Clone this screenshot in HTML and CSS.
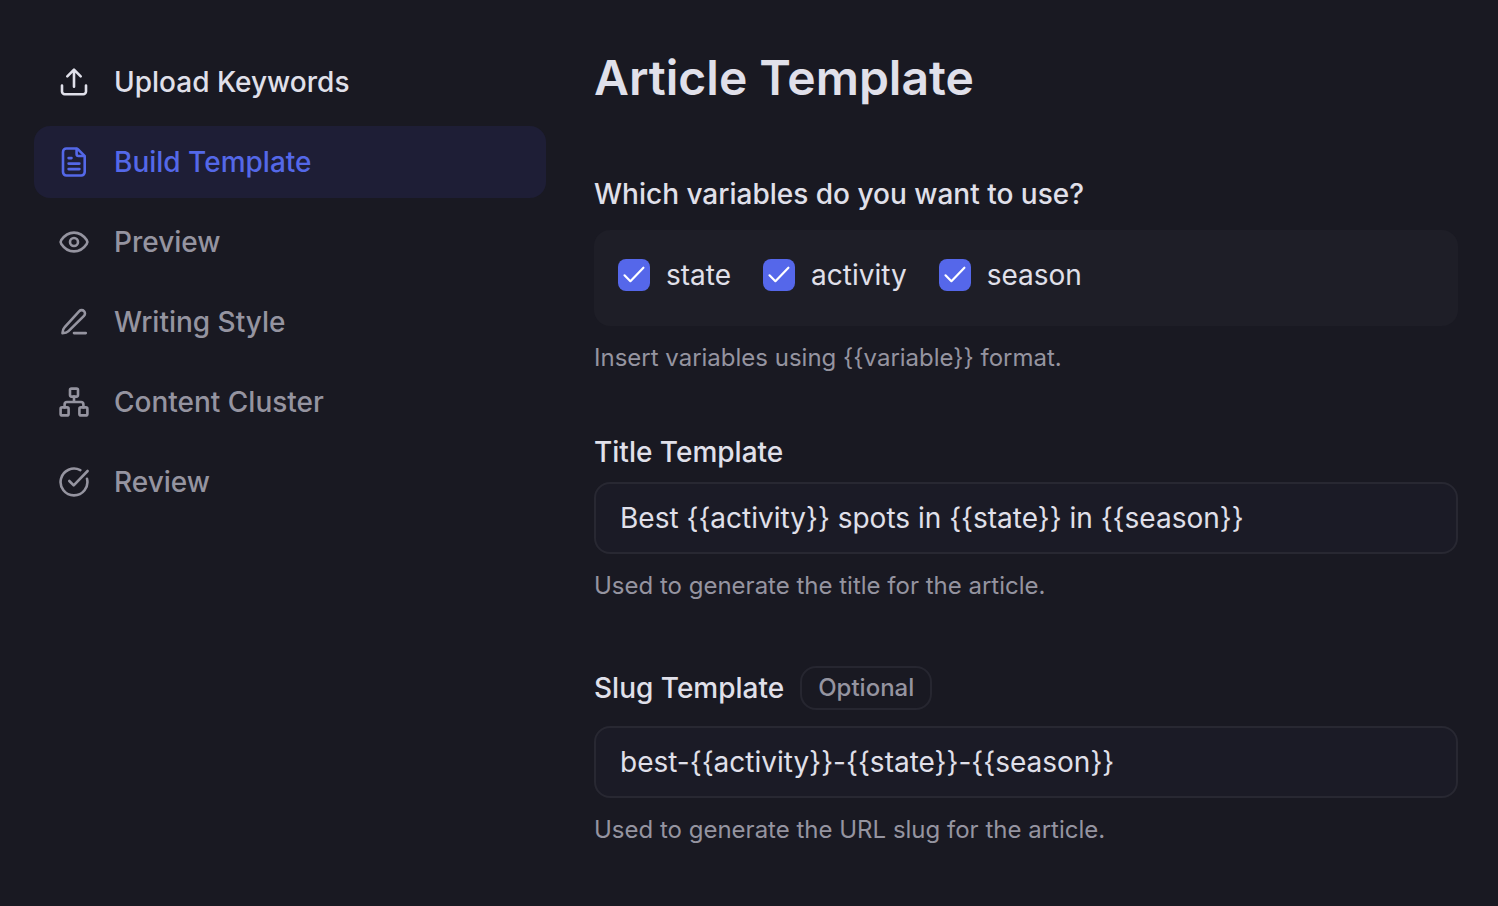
FILE: index.html
```html
<!DOCTYPE html>
<html lang="en">
<head>
    <meta charset="UTF-8">
    <meta name="viewport" content="width=device-width, initial-scale=1.0">
    <title>Article Template</title>
    <link rel="stylesheet" href="styles.css">
</head>
<body>
    <div class="layout">
        <nav class="steps" aria-label="Steps">
            <a class="step done" href="#upload">
                <svg class="icon" viewBox="0 0 32 32" aria-hidden="true">
                    <path d="M4 19.5v6a2.7 2.7 0 0 0 2.7 2.7h18.6a2.7 2.7 0 0 0 2.7-2.7v-6"/>
                    <path d="M9.3 10.3 16 3.6l6.7 6.7M16 3.8v16.9"/>
                </svg>
                Upload Keywords
            </a>
            <a class="step active" href="#template" aria-current="step">
                <svg class="icon" viewBox="0 0 32 32" aria-hidden="true">
                    <path d="M18.4 2.5H8.4A3.4 3.4 0 0 0 5 5.9v20.2a3.4 3.4 0 0 0 3.4 3.4h14.9a3.4 3.4 0 0 0 3.4-3.4V10.8a2 2 0 0 0-.6-1.4l-6.3-6.3a2 2 0 0 0-1.4-.6z"/>
                    <path d="M18.6 3v5.1c0 1 .8 1.9 1.9 1.9h5.8M10.6 12.1h2.9M10.6 17.6h10.8M10.6 23.1h10.8"/>
                </svg>
                Build Template
            </a>
            <a class="step" href="#preview">
                <svg class="icon" viewBox="0 0 32 32" aria-hidden="true">
                    <path d="M3.3 17.9a3.3 3.3 0 0 1 0-3.8C5.200 11.300 9.200 6.600 16 6.600s10.800 4.700 12.700 7.500a3.300 3.300 0 0 1 0 3.800C26.800 20.700 22.800 25.400 16 25.400S5.200 20.700 3.300 17.900z"/>
                    <circle cx="16" cy="16" r="4"/>
                </svg>
                Preview
            </a>
            <a class="step" href="#style">
                <svg class="icon" viewBox="0 0 32 32" aria-hidden="true">
                    <path d="M4.500 27.100s.1-3.900 2-5.800L21.300 5.100a3.300 3.300 0 0 1 4.700 4.700L10.500 25.100c-1.900 1.900-6 2-6 2z"/>
                    <path d="M16 27.100h11.800"/>
                </svg>
                Writing Style
            </a>
            <a class="step" href="#cluster">
                <svg class="icon" viewBox="0 0 32 32" aria-hidden="true">
                    <rect x="12" y="2.600" width="8" height="8" rx="1.500"/>
                    <rect x="2.600" y="21.400" width="8" height="8" rx="1.500"/>
                    <rect x="21.400" y="21.400" width="8" height="8" rx="1.500"/>
                    <path d="M16 10.600V16M6.600 21.400v-3A2.400 2.400 0 0 1 9 16h14a2.400 2.400 0 0 1 2.400 2.400v3"/>
                </svg>
                Content Cluster
            </a>
            <a class="step" href="#review">
                <svg class="icon" viewBox="0 0 32 32" aria-hidden="true">
                    <path d="M29 12.800A13.400 13.400 0 1 1 22.300 4.200"/>
                    <path d="M11.300 15l4.400 4.400L29.600 5"/>
                </svg>
                Review
            </a>
        </nav>

        <main class="content">
            <h1>Article Template</h1>
            <form class="fields">
                <div class="field" role="group" aria-labelledby="variablesLabel">
                    <div class="group-label" id="variablesLabel">Which variables do you want to use?</div>
                    <div class="variables">
                        <label class="variable"><input type="checkbox" name="state" checked>state</label>
                        <label class="variable"><input type="checkbox" name="activity" checked>activity</label>
                        <label class="variable"><input type="checkbox" name="season" checked>season</label>
                    </div>
                    <p class="hint">Insert variables using {{variable}} format.</p>
                </div>

                <div class="field">
                    <label class="label" for="titleTemplate">Title Template</label>
                    <input class="text-input" type="text" id="titleTemplate" value="Best {{activity}} spots in {{state}} in {{season}}">
                    <p class="hint">Used to generate the title for the article.</p>
                </div>

                <div class="field">
                    <div class="label-row">
                        <label class="label" for="slugTemplate">Slug Template</label>
                        <span class="badge">Optional</span>
                    </div>
                    <input class="text-input" type="text" id="slugTemplate" value="best-{{activity}}-{{state}}-{{season}}">
                    <p class="hint">Used to generate the URL slug for the article.</p>
                </div>
            </form>
        </main>
    </div>
</body>
</html>
```
FILE: styles.css
```css
* {
    box-sizing: border-box;
}

body {
    margin: 0;
    min-height: 100vh;
    background-color: #191922;
    color: #e0e0ea;
    font-family: Inter, "Liberation Sans", sans-serif;
    font-size: 28px;
    line-height: 40px;
}

.layout {
    display: grid;
    grid-template-columns: 16fr 27fr;
    gap: 48px;
    padding: 46px 40px 46px 34px;
}

/* Step navigation */
.steps {
    display: flex;
    flex-direction: column;
    gap: 8px;
}

.step {
    display: flex;
    align-items: center;
    gap: 24px;
    padding: 16px 24px;
    border-radius: 16px;
    color: #9594a0;
    font-weight: 500;
    text-decoration: none;
}

.step.done {
    color: #e0e0ea;
}

.step.active {
    background-color: #1e1e36;
    color: #5468e8;
}

.icon {
    flex: none;
    width: 32px;
    height: 32px;
    fill: none;
    stroke: currentColor;
    stroke-width: 2.6;
    stroke-linecap: round;
    stroke-linejoin: round;
}

/* Template form */
h1 {
    margin: 0 0 64px;
    font-size: 48px;
    line-height: 64px;
    font-weight: 600;
}

.fields {
    display: flex;
    flex-direction: column;
    gap: 64px;
}

.field {
    display: flex;
    flex-direction: column;
    gap: 16px;
}

.group-label {
    font-weight: 500;
}

.label {
    line-height: 28px;
    font-weight: 500;
}

.label-row {
    display: flex;
    align-items: center;
    gap: 16px;
}

.badge {
    padding: 4px 16px;
    border: 2px solid #262630;
    border-radius: 16px;
    color: #9594a0;
    font-size: 24px;
    line-height: 32px;
    font-weight: 500;
}

.variables {
    display: flex;
    flex-wrap: wrap;
    gap: 8px 32px;
    padding: 25px 24px 31px;
    border-radius: 16px;
    background-color: #1e1e27;
}

.variable {
    display: flex;
    align-items: center;
    gap: 16px;
}

.variable input {
    appearance: none;
    width: 32px;
    height: 32px;
    margin: 0;
    border-radius: 8px;
    background-color: #2a2a35;
}

.variable input:checked {
    background: #5567ea url("data:image/svg+xml,%3Csvg xmlns='http://www.w3.org/2000/svg' viewBox='0 0 32 32'%3E%3Cpath d='M6.500 16.300l5.900 5.900L25.400 8.700' fill='none' stroke='white' stroke-width='2.200' stroke-linecap='round' stroke-linejoin='round'/%3E%3C/svg%3E") center / contain no-repeat;
}

.text-input {
    width: 100%;
    height: 72px;
    padding: 0 24px;
    border: 2px solid #282832;
    border-radius: 16px;
    background-color: #1b1b26;
    color: inherit;
    font: inherit;
}

.text-input:focus {
    outline: none;
    border-color: #5567ea;
}

.hint {
    margin: 0;
    color: #9594a0;
    font-size: 24px;
    line-height: 32px;
}

@media (max-width: 900px) {
    .layout {
        grid-template-columns: 1fr;
        padding: 24px;
    }
}
```
